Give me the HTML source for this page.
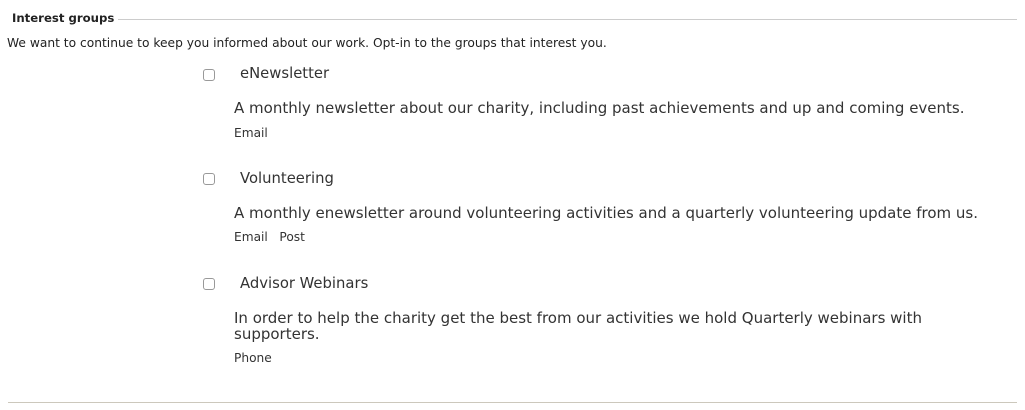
<!DOCTYPE html>
<html><head><style>
body{margin:0;width:1025px;height:410px;background:#fff;position:relative;font-family:"DejaVu Sans","Liberation Sans",sans-serif;color:#333;overflow:hidden}
.a{position:absolute;white-space:nowrap}
.cb{position:absolute;width:10px;height:10px;border:1px solid #999;border-radius:3px;background:#fff}
.t{font-size:14.8px;color:#333}
.d{font-size:15px;color:#333;line-height:16px}
.s{font-size:12.2px;color:#333}
</style></head><body>
<div class="a" style="left:12px;top:11px;font-size:11.7px;font-weight:bold;color:#222">Interest groups</div>
<div style="position:absolute;left:118px;right:8px;top:19px;height:1px;background:#ccc"></div>
<div class="a" style="left:7px;top:36px;font-size:12.25px;color:#222">We want to continue to keep you informed about our work. Opt-in to the groups that interest you.</div>

<div class="cb" style="left:203px;top:69px"></div>
<div class="a t" style="left:240px;top:65px">eNewsletter</div>
<div class="a d" style="left:234px;top:100px">A monthly newsletter about our charity, including past achievements and up and coming events.</div>
<div class="a s" style="left:234px;top:126px">Email</div>

<div class="cb" style="left:203px;top:173px"></div>
<div class="a t" style="left:240px;top:170px">Volunteering</div>
<div class="a d" style="left:234px;top:205px">A monthly enewsletter around volunteering activities and a quarterly volunteering update from us.</div>
<div class="a s" style="left:234px;top:230px">Email&nbsp;&nbsp;&nbsp;Post</div>

<div class="cb" style="left:203px;top:278px"></div>
<div class="a t" style="left:240px;top:275px">Advisor Webinars</div>
<div class="a d" style="left:234px;top:310px">In order to help the charity get the best from our activities we hold Quarterly webinars with<br>supporters.</div>
<div class="a s" style="left:234px;top:351px">Phone</div>

<div style="position:absolute;left:8px;right:8px;top:402px;height:1px;background:#ccc8bc"></div>
</body></html>
